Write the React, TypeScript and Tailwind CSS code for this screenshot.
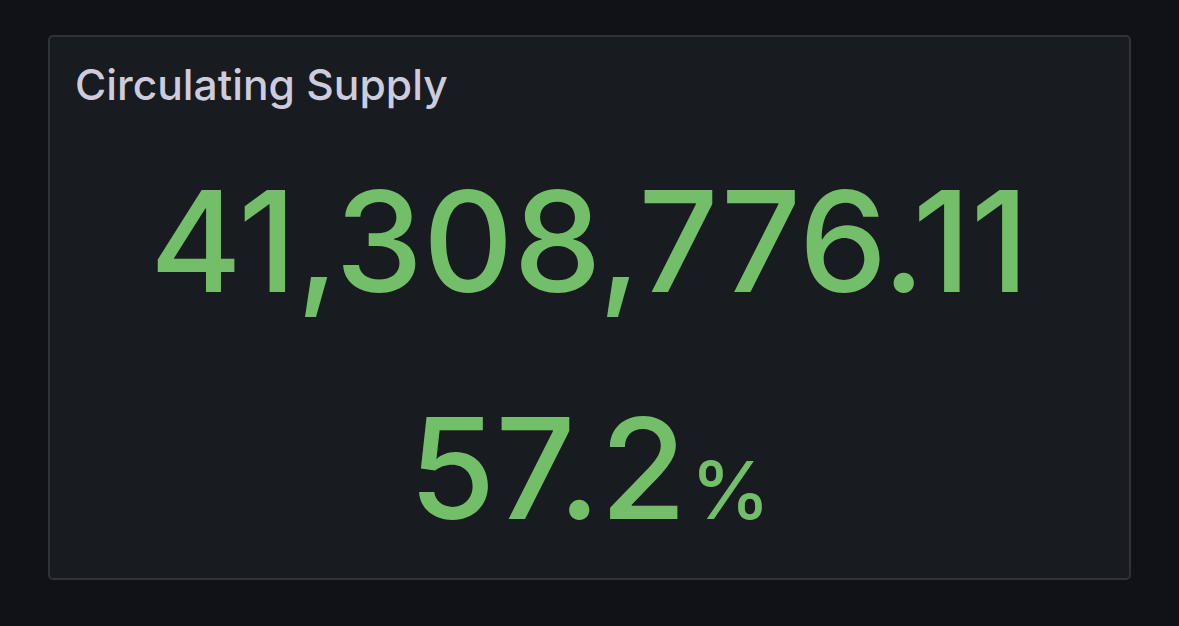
export default function App() {
  return (
    <div className="w-[1179px] h-[626px] bg-[#111217] pt-[35px] pl-[48px] font-['Inter',sans-serif]">
      <div className="w-[1083px] h-[545px] border-2 border-[#303237] rounded-[5px] bg-[#181b1f] flex flex-col">
        <div className="pt-[27px] pl-[25px] text-[42.6px] leading-[42px] font-medium text-[#ccccdc]">
          Circulating Supply
        </div>
        <div className="flex flex-col items-center text-[#73bf69] font-medium">
          <div className="mt-[65px] text-[140px] leading-[140px]">41,308,776.11</div>
          <div className="mt-[87px] flex items-baseline text-[140px] leading-[140px]">
            <span>57.2</span>
            <span className="ml-[4px] text-[80px]">%</span>
          </div>
        </div>
      </div>
    </div>
  );
}
